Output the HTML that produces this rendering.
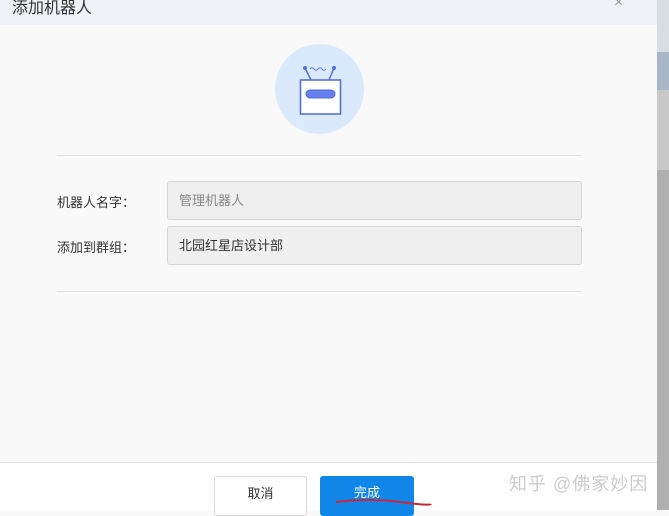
<!DOCTYPE html>
<html><head><style>
body{margin:0;width:669px;height:510px;overflow:hidden;position:relative;font-family:"Liberation Sans","Noto Sans CJK SC",sans-serif;background:#f9f9f9}
.a{position:absolute}
.inp{position:absolute;left:167px;width:415px;height:39px;background:#efefef;border:1px solid #d6d6d6;border-radius:3px;box-sizing:border-box;font-size:13px;line-height:37px;padding-left:11px}
.lab{position:absolute;left:57px;font-size:13px;color:#333}
</style></head><body>
<div class="a" style="left:0;top:0;width:657px;height:25px;background:#eef1f5"></div>
<div class="a" style="left:12px;top:-6px;font-size:16px;color:#333">添加机器人</div>
<div class="a" style="left:614px;top:-6px;font-size:16px;color:#999">×</div>
<div class="a" style="left:657px;top:0;width:12px;height:510px;background:#b0b0b0"></div>
<div class="a" style="left:657px;top:52px;width:12px;height:38px;background:#a9b6c6"></div>
<div class="a" style="left:657px;top:0;width:12px;height:52px;background:#d8dde3"></div>
<div class="a" style="left:657px;top:90px;width:12px;height:80px;background:#c8c8c8"></div>
<svg class="a" style="left:275px;top:44px" width="90" height="91">
<ellipse cx="44.5" cy="45" rx="44.5" ry="45" fill="#dbe9fd"/>
<path d="M30 24 L36 36 M59 24 L54 36" stroke="#5570d8" stroke-width="1.5"/>
<circle cx="30" cy="24" r="2" fill="#5570d8"/><circle cx="59" cy="24" r="2" fill="#5570d8"/>
<path d="M35 25 q2 -2.5 4 0 t4 0 t4 0 t4 0" stroke="#5570d8" fill="none" stroke-width="1"/>
<rect x="25.5" y="36" width="40" height="34" fill="#fff" stroke="#4f6bd4" stroke-width="1.5"/>
<rect x="31" y="46" width="29" height="8" rx="4" fill="#6680ee" stroke="#4f6bd4"/>
</svg>
<div class="a" style="left:57px;top:155px;width:525px;height:1px;background:#e2e2e2"></div>
<div class="lab" style="top:192px">机器人名字：</div>
<div class="inp" style="top:181px;color:#888">管理机器人</div>
<div class="lab" style="top:237px">添加到群组：</div>
<div class="inp" style="top:226px;color:#333">北园红星店设计部</div>
<div class="a" style="left:57px;top:291px;width:525px;height:1px;background:#e2e2e2"></div>
<div class="a" style="left:0;top:462px;width:657px;height:48px;background:#fff;border-top:1px solid #e0e0e0"></div>
<div class="a" style="left:214px;top:476px;width:93px;height:40px;border:1px solid #d9d9d9;border-radius:3px;background:#fff;box-sizing:border-box;text-align:center;line-height:34px;font-size:13px;color:#333">取消</div>
<div class="a" style="left:320px;top:476px;width:94px;height:40px;border-radius:3px;background:#0f86e8;text-align:center;line-height:34px;font-size:13px;color:#fff">完成</div>
<svg class="a" style="left:330px;top:496px" width="110" height="14"><path d="M6 6 Q40 2 70 6 T101 8" stroke="#c7283a" stroke-width="2" fill="none"/></svg>
<div class="a" style="left:509px;top:470px;font-size:18px;color:#ccc;letter-spacing:1px">知乎 @佛家妙因</div>
</body></html>
